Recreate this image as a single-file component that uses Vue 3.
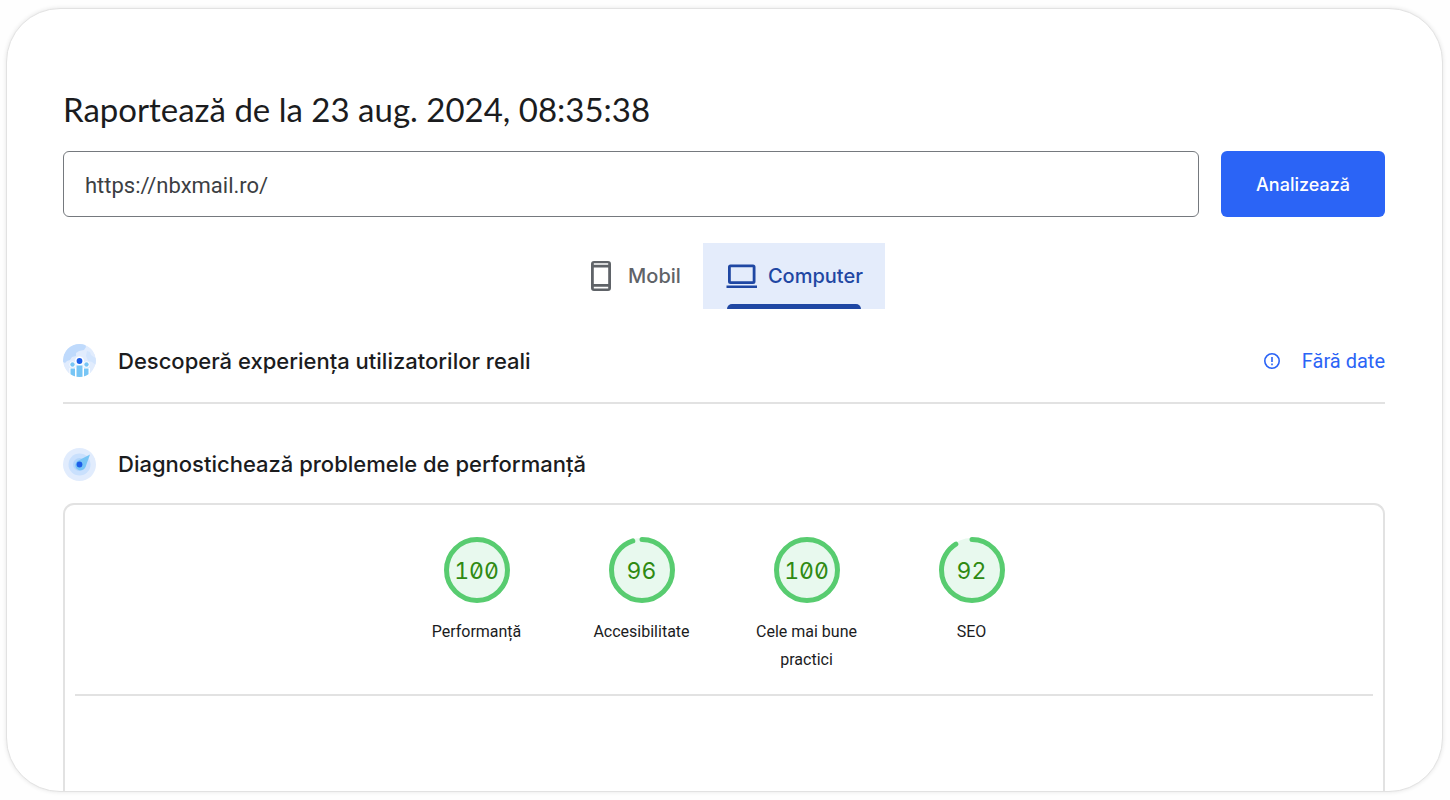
<script setup>
import { ref } from 'vue'

const url = ref('https://nbxmail.ro/')
const active = ref('computer')

const RADIUS = 30.5
const LENGTH = 2 * Math.PI * RADIUS

const scores = [
  { value: 100, label: 'Performanță' },
  { value: 96, label: 'Accesibilitate' },
  { value: 100, label: 'Cele mai bune practici' },
  { value: 92, label: 'SEO' }
]

function dash(value) {
  const drawn = value === 100 ? LENGTH : (LENGTH * value) / 100 - 2
  return `${drawn} ${LENGTH}`
}
</script>

<template>
  <main class="card">
    <h1>Raportează de la 23 aug. 2024, 08:35:38</h1>

    <form class="search" @submit.prevent>
      <input v-model="url" type="text" aria-label="Adresa paginii web" />
      <button type="submit">Analizează</button>
    </form>

    <div class="tabs" role="tablist">
      <button
        type="button"
        role="tab"
        class="tab"
        :class="{ active: active === 'mobil' }"
        :aria-selected="active === 'mobil'"
        @click="active = 'mobil'"
      >
        <svg viewBox="0 0 33 33" aria-hidden="true">
          <path
            fill-rule="evenodd"
            d="M9 1h14a3 3 0 0 1 3 3v24a3 3 0 0 1-3 3H9a3 3 0 0 1-3-3V4a3 3 0 0 1 3-3zM8.800 3.300v1.500h14.400V3.300zM8.800 7.500v16.500h14.400V7.500zM8.800 26.700v1.700h14.400v-1.700z"
          />
        </svg>
        <span>Mobil</span>
      </button>
      <button
        type="button"
        role="tab"
        class="tab"
        :class="{ active: active === 'computer' }"
        :aria-selected="active === 'computer'"
        @click="active = 'computer'"
      >
        <svg viewBox="0 0 33 33" aria-hidden="true">
          <path
            fill-rule="evenodd"
            d="M5.500 4.500h22.500a2.500 2.500 0 0 1 2.500 2.500v14.500a2.500 2.500 0 0 1-2.500 2.500H5.500A2.500 2.500 0 0 1 3 21.500V7A2.500 2.500 0 0 1 5.500 4.500zM5.800 7.200v14h21.900v-14zM1.500 25.500h30.500v2.600H1.500z"
          />
        </svg>
        <span>Computer</span>
      </button>
    </div>

    <section class="section field">
      <svg class="badge" viewBox="0 0 33 33" aria-hidden="true">
        <defs>
          <clipPath id="globe"><circle cx="16.500" cy="16.500" r="16.500" /></clipPath>
        </defs>
        <g clip-path="url(#globe)">
          <circle cx="16.500" cy="16.500" r="16.500" fill="#e1ecfd" />
          <path d="M0 0H22L23 3l-2 3-5 1-3 2 0 3-4 1-2 3-3 1-2 2-2-1z" fill="#bfdafc" />
          <path d="M24 7l3 1 1 3 3 2 2 1v7l-4-3-4-1-2-5z" fill="#d3e5fd" />
          <g fill="#fff">
            <circle cx="16.500" cy="17" r="4.500" />
            <circle cx="9.500" cy="20.500" r="3" />
            <circle cx="23.500" cy="20.500" r="3" />
            <path d="M6.500 24H12.500V21.500H20.500V24H27V33H6.500z" />
          </g>
          <g fill="#77c5f5">
            <circle cx="9.500" cy="20.500" r="2.200" />
            <circle cx="23.500" cy="20.500" r="2.200" />
            <path d="M7.500 24.500h4.500V33H7.500zM13.500 21.500h6v11.500h-6zM21 24.500h4.500V33H21z" />
          </g>
          <circle cx="16.500" cy="17" r="2.900" fill="#1c5ee8" />
        </g>
      </svg>
      <h2>Descoperă experiența utilizatorilor reali</h2>
      <a href="#" class="nodata">
        <svg viewBox="0 0 16 16" aria-hidden="true">
          <circle cx="8" cy="8" r="7.200" />
          <path d="M8 4v5M8 10.500v1.700" />
        </svg>
        <span>Fără date</span>
      </a>
    </section>

    <section class="section">
      <svg class="badge" viewBox="0 0 33 33" aria-hidden="true">
        <circle cx="16.500" cy="16.500" r="16.500" fill="#e1ecfd" />
        <circle cx="16.500" cy="16.500" r="11" fill="#c9e0fd" />
        <circle cx="16.500" cy="16.500" r="6.500" fill="#b1d4fb" />
        <path d="M27 6.500L22.500 19c-2 4-6 4-8.500 2s-2-6 .5-8z" fill="#77c5f5" />
        <circle cx="16.500" cy="16.500" r="2.900" fill="#1c5ee8" />
      </svg>
      <h2>Diagnostichează problemele de performanță</h2>
    </section>

    <div class="panel">
      <ul class="scores">
        <li v-for="s in scores" :key="s.label">
          <div class="gauge">
            <svg viewBox="0 0 66 66" aria-hidden="true">
              <circle class="disc" cx="33" cy="33" r="32" />
              <circle class="ring" cx="33" cy="33" :r="RADIUS" :stroke-dasharray="dash(s.value)" />
            </svg>
            <span>{{ s.value }}</span>
          </div>
          <p>{{ s.label }}</p>
        </li>
      </ul>
    </div>
  </main>
</template>

<style>
body {
  background: #fefefe;
}
</style>

<style scoped>
* {
  box-sizing: border-box;
}
.card {
  display: flex;
  flex-direction: column;
  min-height: calc(100vh - 16px);
  margin: 8px 7px 8px 6px;
  padding: 78px 57px 0 56px;
  border: 1px solid #e2e2e2;
  border-radius: 54px;
  background: #fff;
  box-shadow: 0 0 4px rgba(0, 0, 0, 0.1);
  color: #1b1c1e;
  font-family: Roboto, sans-serif;
  overflow: hidden;
}
h1,
h2 {
  margin: 0;
}
h1 {
  font: 400 33px/44px Lato, sans-serif;
}
h2 {
  font: 500 22px/30px Inter, sans-serif;
}
.search {
  display: flex;
  gap: 22px;
  margin-top: 20px;
}
.search input {
  flex: 1;
  min-width: 0;
  height: 66px;
  padding: 2px 21px 0;
  border: 1px solid #75797e;
  border-radius: 6px;
  background: #fff;
  color: #3c4043;
  font: 400 22px Roboto, sans-serif;
  outline: none;
}
.search button {
  padding: 0 35px;
  border: 0;
  border-radius: 6px;
  background: #2b64f6;
  color: #fff;
  font: 500 18px Inter, sans-serif;
}
.tabs {
  display: flex;
  justify-content: center;
  margin-top: 26px;
}
.tab {
  position: relative;
  display: flex;
  align-items: center;
  gap: 10px;
  height: 66px;
  padding: 0 22px;
  border: 0;
  background: none;
  color: #5f6368;
  font: 500 20px Inter, sans-serif;
}
.tab svg {
  width: 33px;
  height: 33px;
  fill: currentColor;
}
.tab.active {
  background: #e4ecfb;
  color: #1f47a3;
}
.tab.active::after {
  content: "";
  position: absolute;
  right: 24px;
  bottom: 0;
  left: 24px;
  height: 5px;
  border-radius: 5px 5px 0 0;
  background: #1f47a3;
}
.section {
  display: flex;
  align-items: center;
  gap: 22px;
  height: 78px;
}
.section.field {
  height: 95px;
  margin-bottom: 21px;
  padding-top: 10px;
  border-bottom: 2px solid #e2e2e2;
}
.badge {
  flex: none;
  width: 33px;
  height: 33px;
}
.nodata {
  display: flex;
  align-items: center;
  gap: 22px;
  margin-left: auto;
  color: #2b64f6;
  font-size: 20px;
  text-decoration: none;
}
.nodata svg {
  width: 16px;
  height: 16px;
  fill: none;
  stroke: currentColor;
  stroke-width: 1.600;
}
.panel {
  flex: 1;
  padding: 32px 10px 0;
  border: 2px solid #e2e2e2;
  border-bottom: 0;
  border-radius: 11px 11px 0 0;
}
.scores {
  display: flex;
  justify-content: center;
  margin: 0;
  padding: 0 0 20px;
  border-bottom: 2px solid #e2e2e2;
  list-style: none;
}
.scores li {
  width: 165px;
  padding: 0 22px;
  text-align: center;
}
.gauge {
  display: grid;
  place-items: center;
}
.gauge > * {
  grid-area: 1 / 1;
}
.gauge svg {
  width: 66px;
  height: 66px;
  transform: rotate(-90deg);
}
.disc {
  fill: #e8f9ee;
}
.ring {
  fill: none;
  stroke: #58cc70;
  stroke-width: 5;
  stroke-linecap: round;
}
.gauge span {
  z-index: 1;
  padding-top: 2px;
  color: #2f8a12;
  font: 400 23px Inter, sans-serif;
  font-feature-settings: "zero", "tnum";
}
.scores p {
  margin: 15px 0 0;
  font-size: 16px;
  line-height: 28px;
}
</style>
